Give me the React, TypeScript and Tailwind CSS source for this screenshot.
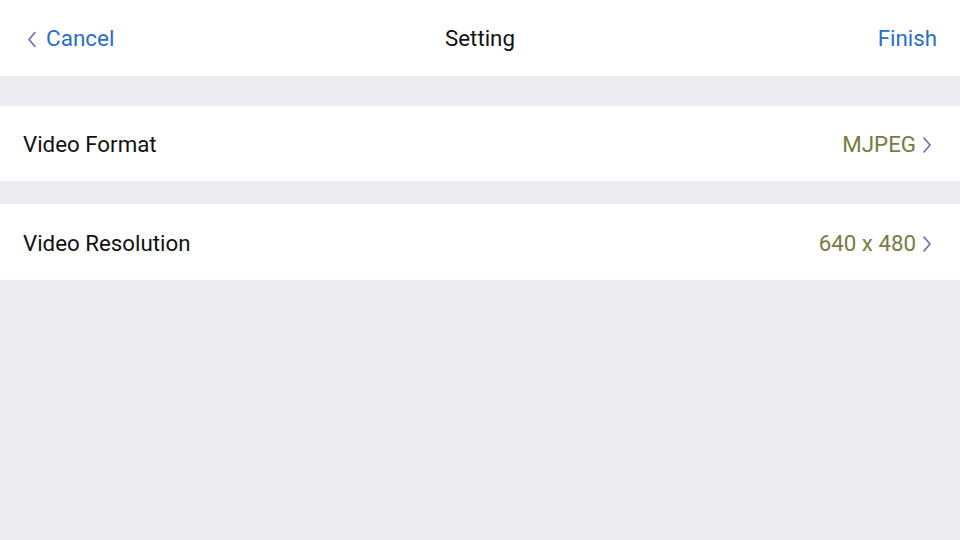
import { useState } from 'react';

function Chevron({ dir = 'right', className = '' }: { dir?: 'left' | 'right'; className?: string }) {
  return (
    <svg viewBox="0 0 10 18" className={className} fill="none" stroke="currentColor" strokeWidth="1.6" strokeLinecap="round" strokeLinejoin="round">
      {dir === 'right' ? <path d="M2 2l6 7-6 7" /> : <path d="M8 2L2 9l6 7" />}
    </svg>
  );
}

function Row({ label, value, h }: { label: string; value: string; h: string }) {
  return (
    <button className={`flex w-full items-center justify-between bg-white pl-[23px] pr-[28px] pt-[3px] text-left ${h}`}>
      <span className="text-[22.3px] text-[#111]">{label}</span>
      <span className="flex items-center gap-[6px] text-[22.3px] text-[#7a7a45]">
        {value}
        <Chevron className="h-[18px] w-[10px] text-[#6b6bb0]" />
      </span>
    </button>
  );
}

export default function App() {
  const [format] = useState('MJPEG');
  const [resolution] = useState('640 x 480');

  return (
    <div className="flex h-[540px] w-[960px] flex-col bg-[#ececf1] font-['Roboto',sans-serif]">
      <header className="relative flex h-[76px] items-center justify-between bg-white pl-[27px] pr-[23px] pt-[2px]">
        <button className="flex items-center gap-[9px] text-[22.5px] text-[#2d6ec4]">
          <Chevron dir="left" className="h-[19px] w-[10px] text-[#6b6bb0]" />
          Cancel
        </button>
        <h1 className="absolute left-1/2 -translate-x-1/2 text-[22.3px] text-[#111]">Setting</h1>
        <button className="text-[22.3px] text-[#2d6ec4]">Finish</button>
      </header>
      <div className="h-[30px]" />
      <Row label="Video Format" value={format} h="h-[75px]" />
      <div className="h-[23px]" />
      <Row label="Video Resolution" value={resolution} h="h-[76px]" />
    </div>
  );
}
